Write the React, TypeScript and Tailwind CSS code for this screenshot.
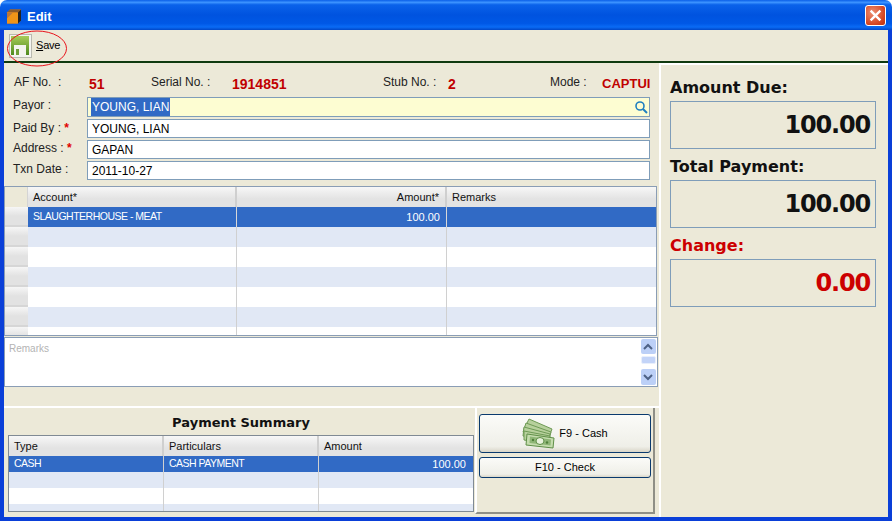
import React from 'react';

const uiFont = "font-['Liberation_Sans',Arial,sans-serif]";

const accountRows = ['selected', 'alt', 'plain', 'alt', 'plain', 'alt', 'plain'];

const SaveIcon = () => (
  <svg width="23" height="24" viewBox="0 0 23 24" className="shrink-0">
    <defs>
      <linearGradient id="floppy" x1="0" y1="0" x2="0" y2="1">
        <stop offset="0" stopColor="#a8cc58" />
        <stop offset="1" stopColor="#4f8a1f" />
      </linearGradient>
    </defs>
    <rect x="0.5" y="0.5" width="22" height="23" fill="#f4f4f0" stroke="#b9b9b0" />
    <path d="M2 2H20V21H2Z" fill="url(#floppy)" />
    <rect x="5" y="11" width="12" height="10" fill="#f4f4ee" />
    <rect x="7" y="15" width="3" height="6" fill="#6f9f37" />
  </svg>
);

const CashIcon = () => (
  <svg width="34" height="31" viewBox="0 0 34 31" className="shrink-0">
    <g stroke="#6e9a55" strokeWidth="1" fill="#b7d09c">
      <path d="M7 1L30 11L27 19L2 11Z" />
      <path d="M4 5L29 14L27 21L1 14Z" />
      <path d="M2 9L28 16L27 23L1 18Z" />
      <path d="M2 13L28 18L27 26L2 22Z" />
    </g>
    <path d="M5 16L32 20L31 30L4 27Z" fill="#c5dcae" stroke="#5f8f47" />
    <path d="M8 18.5L29 21.5L28.5 27.5L7.5 25Z" fill="#8fb676" />
    <ellipse cx="18" cy="23" rx="4" ry="3.5" fill="#e8f2dc" stroke="#5f8f47" />
    <circle cx="11" cy="22" r="1.2" fill="#4f7f3a" />
    <circle cx="25" cy="24.5" r="1.2" fill="#4f7f3a" />
  </svg>
);

const Field = ({ label, star, value, selected, labelClass }: { label: string; star?: boolean; value: string; selected?: boolean; labelClass?: string }) => (
  <div className={`flex items-center ${selected ? 'h-[20px]' : 'h-[19px]'}`}>
    <div className={`w-[74px] shrink-0 text-[12px] text-[#222] ${labelClass ?? ''}`}>
      {label}
      {star && <span className="text-[#e00000] font-bold"> *</span>}
    </div>
    <div className={`relative w-[563px] h-full border border-[#7f9db9] flex items-center pl-[4px] text-[12px] text-black ${selected ? 'bg-[#fdfdd2]' : 'bg-white'}`}>
      {selected ? <span className="bg-[#316ac5] text-white px-px -ml-px">{value}</span> : value}
      {selected && (
        <svg width="14" height="14" viewBox="0 0 14 14" className="absolute right-[1px] top-[2px]">
          <circle cx="6" cy="6" r="4" fill="none" stroke="#1f7fc0" strokeWidth="1.6" />
          <path d="M9 9L13 13" stroke="#1f7fc0" strokeWidth="2" />
        </svg>
      )}
    </div>
  </div>
);

const AmountBox = ({ label, value, red }: { label: string; value: string; red?: boolean }) => (
  <div className="flex flex-col">
    <div className={`h-[20px] leading-[20px] text-[16px] font-bold font-['DejaVu_Sans',sans-serif] ${red ? 'text-[#cc0000]' : 'text-[#111]'}`}>{label}</div>
    <div className={`mt-[3px] w-[206px] h-[48px] border border-[#7f9db9] flex items-center justify-end pr-[5px] text-[24px] font-bold font-['DejaVu_Sans',sans-serif] tracking-[-1.2px] ${red ? 'text-[#cc0000]' : 'text-[#111]'}`}>{value}</div>
  </div>
);

const App = () => {
  return (
    <div className={`w-[892px] h-[521px] overflow-hidden bg-white rounded-t-[7px] flex flex-col ${uiFont}`}>
      {/* Title bar */}
      <div className="h-[30px] shrink-0 flex items-center pl-[6px] pr-[6px] bg-[linear-gradient(180deg,#0a5fe8_0%,#3c93ff_8%,#0a62ea_16%,#0053df_50%,#0058e6_78%,#0a6bf5_90%,#0047c8_100%)]">
        <svg width="16" height="17" viewBox="0 0 16 16" className="shrink-0 mt-[2px]">
          <path d="M1 4L4 1H15V12L12 15H1Z" fill="#d9781c" />
          <path d="M1 4L4 1H15L12 4Z" fill="#8a5a2a" />
          <path d="M12 4L15 1V12L12 15Z" fill="#222" />
          <path d="M1 4H12V15H1Z" fill="#ef9418" />
          <path d="M1 4H7L1 10Z" fill="#b9763a" />
        </svg>
        <span className="ml-[5px] mt-[3px] text-[13px] font-bold text-white">Edit</span>
        <div className="ml-auto w-[21px] h-[21px] rounded-[3px] border border-white bg-[radial-gradient(circle_at_35%_35%,#ec8f72,#d4431f_70%,#b8330f)] flex items-center justify-center">
          <svg width="13" height="13" viewBox="0 0 12 12">
            <path d="M1.5 1.5L10.5 10.5M10.5 1.5L1.5 10.5" stroke="white" strokeWidth="2.2" />
          </svg>
        </div>
      </div>

      {/* Window body */}
      <div className="flex-1 min-h-0 flex flex-col bg-[#ece9d8] border-l-[4px] border-r-[4px] border-b-[4px] border-l-[#0a3fd8] border-r-[#0a3fd8] border-b-[#0a3fd8]">
        {/* Toolbar */}
        <div className="relative h-[33px] shrink-0 flex items-center pl-[5px] border-b-[2px] border-b-[#0f3a0f]">
          <SaveIcon />
          <span className="ml-[4px] text-[11px] tracking-[-0.2px] text-black">
            <span className="underline">S</span>ave
          </span>
          <svg width="62" height="38" viewBox="0 0 62 38" className="absolute left-[2px] top-0">
            <ellipse cx="31" cy="18.5" rx="29.5" ry="17.5" fill="none" stroke="#e8141c" strokeWidth="1" />
          </svg>
        </div>

        <div className="flex-1 min-h-0 flex">
          {/* Left column */}
          <div className="w-[655px] shrink-0 flex flex-col">
            <div className="h-[34px] flex items-end pl-[10px] pb-[6px] text-[12px] text-[#222]">
              <div className="w-[75px]">AF No.&nbsp; :</div>
              <div className="w-[62px] font-bold text-[14px] leading-[14px] text-[#c00000]">51</div>
              <div className="w-[81px]">Serial No. :</div>
              <div className="w-[151px] font-bold text-[14px] leading-[14px] text-[#c00000]">1914851</div>
              <div className="w-[65px]">Stub No. :</div>
              <div className="w-[102px] font-bold text-[14px] leading-[14px] text-[#c00000]">2</div>
              <div className="w-[52px]">Mode :</div>
              <div className="w-[48px] font-bold text-[13px] leading-[14px] text-[#c00000]">CAPTUI</div>
            </div>
            <div className="flex flex-col gap-[2px] pl-[9px]">
              <Field label="Payor :" value="YOUNG, LIAN" selected labelClass="pb-[5px]" />
              <Field label="Paid By :" star value="YOUNG, LIAN" labelClass="pb-[2px]" />
              <Field label="Address :" star value="GAPAN" labelClass="pb-[4px]" />
              <Field label="Txn Date  :" value="2011-10-27" labelClass="pb-[4px]" />
            </div>

            {/* Account grid */}
            <div className="mt-[6px] w-[653px] h-[150px] shrink-0 border border-[#8a9db5] bg-white overflow-hidden text-[11px]">
              <div className="flex h-[20px] text-[#111]">
                <div className="w-[23px] bg-[#ece9d8] border-r border-[#d4d4d4]" />
                <div className="w-[209px] pl-[5px] flex items-center bg-[linear-gradient(180deg,#f7f7f7,#e3e3e3_60%)] border-r-[2px] border-[#cfcfcf]">Account*</div>
                <div className="w-[210px] pr-[6px] flex items-center justify-end bg-[linear-gradient(180deg,#f7f7f7,#e3e3e3_60%)] border-r-[2px] border-[#cfcfcf]">Amount*</div>
                <div className="flex-1 pl-[5px] flex items-center bg-[linear-gradient(180deg,#f7f7f7,#e3e3e3_60%)]">Remarks</div>
              </div>
              {accountRows.map((kind, i) => (
                <div key={i} className="flex h-[20px]">
                  <div className="w-[23px] bg-[linear-gradient(180deg,#f6f6f6,#e2e2e2_50%)] border-b-[2px] border-[#d6d6d6]" />
                  <div className={`w-[209px] pl-[5px] flex items-center border-r-[1px] text-[10.5px] tracking-[-0.5px] ${kind === 'selected' ? 'bg-[#316ac5] text-white border-[#d8d8d8]' : kind === 'alt' ? 'bg-[#e1e8f5] border-[#d0d0d0]' : 'bg-white border-[#d0d0d0]'}`}>
                    {kind === 'selected' ? 'SLAUGHTERHOUSE - MEAT' : ''}
                  </div>
                  <div className={`w-[210px] pr-[6px] flex items-center justify-end border-r-[1px] ${kind === 'selected' ? 'bg-[#316ac5] text-white border-[#d8d8d8]' : kind === 'alt' ? 'bg-[#e1e8f5] border-[#d0d0d0]' : 'bg-white border-[#d0d0d0]'}`}>
                    {kind === 'selected' ? '100.00' : ''}
                  </div>
                  <div className={`flex-1 ${kind === 'selected' ? 'bg-[#316ac5]' : kind === 'alt' ? 'bg-[#e1e8f5]' : 'bg-white'}`} />
                </div>
              ))}
            </div>

            {/* Remarks box */}
            <div className="mt-px w-[654px] h-[50px] shrink-0 border border-[#8a9db5] bg-white flex">
              <div className="flex-1 pl-[4px] pt-[3px] text-[10px] text-[#b4b4b4]">Remarks</div>
              <div className="w-[16px] mr-px flex flex-col items-center pt-px">
                <div className="w-[15px] h-[15px] rounded-[2px] bg-[#bcd0f7] flex items-center justify-center">
                  <svg width="10" height="7" viewBox="0 0 10 7"><path d="M1 6L5 2L9 6" fill="none" stroke="#4d6185" strokeWidth="2" /></svg>
                </div>
                <div className="w-[15px] h-[8px] mt-[2px] rounded-[2px] bg-[#c3d4f8] border border-[#e8effc]" />
                <div className="w-[15px] h-[16px] mt-[5px] rounded-[2px] bg-[#bcd0f7] flex items-center justify-center">
                  <svg width="10" height="7" viewBox="0 0 10 7"><path d="M1 1L5 5L9 1" fill="none" stroke="#4d6185" strokeWidth="2" /></svg>
                </div>
              </div>
            </div>

            {/* Payment area */}
            <div className="mt-[19px] flex-1 min-h-0 flex border-t-[2px] border-white">
              <div className="w-[472px] shrink-0 pl-[4px] pr-[2px] flex flex-col">
                <div className="h-[27px] pt-[2px] flex items-center justify-center text-[13px] font-bold text-[#111] font-['DejaVu_Sans',sans-serif]">Payment Summary</div>
                <div className="w-[466px] h-[77px] border border-[#808a94] bg-white overflow-hidden text-[11px]">
                  <div className="flex h-[20px] text-[#111]">
                    <div className="w-[155px] pl-[5px] flex items-center bg-[linear-gradient(180deg,#f7f7f7,#e3e3e3_60%)] border-r-[2px] border-[#cfcfcf]">Type</div>
                    <div className="w-[155px] pl-[5px] flex items-center bg-[linear-gradient(180deg,#f7f7f7,#e3e3e3_60%)] border-r-[2px] border-[#cfcfcf]">Particulars</div>
                    <div className="flex-1 pl-[5px] flex items-center bg-[linear-gradient(180deg,#f7f7f7,#e3e3e3_60%)]">Amount</div>
                  </div>
                  {['selected', 'alt', 'plain', 'alt'].map((kind, i) => {
                    const rowBg = kind === 'selected' ? 'bg-[#316ac5] text-white' : kind === 'alt' ? 'bg-[#e1e8f5]' : 'bg-white';
                    return (
                      <div key={i} className={`flex h-[16px] ${rowBg}`}>
                        <div className="w-[155px] pl-[5px] flex items-center border-r border-[#d0d0d0] text-[10.5px] tracking-[-0.5px]">{kind === 'selected' ? 'CASH' : ''}</div>
                        <div className="w-[155px] pl-[5px] flex items-center border-r border-[#d0d0d0] text-[10.5px] tracking-[-0.5px]">{kind === 'selected' ? 'CASH PAYMENT' : ''}</div>
                        <div className="flex-1 pr-[7px] flex items-center justify-end">{kind === 'selected' ? '100.00' : ''}</div>
                      </div>
                    );
                  })}
                </div>
              </div>
              <div className="w-[180px] shrink-0 ml-[-1px] h-[106px] border-r-[2px] border-b-[2px] border-r-[#8f8f86] border-b-[#8f8f86] pl-[2px] pt-[6px] flex flex-col gap-[4px] border-l-[2px] border-l-white">
                <button className="w-[172px] h-[39px] rounded-[3px] border border-[#0a3a6e] bg-[linear-gradient(180deg,#fbfbf8,#efefe8_85%,#d9d6c8)] flex items-center justify-center text-[11px] text-black">
                  <CashIcon />
                  <span className="ml-[3px]">F9 - Cash</span>
                </button>
                <button className="w-[172px] h-[21px] rounded-[3px] border border-[#0a3a6e] bg-[linear-gradient(180deg,#fbfbf8,#efefe8_85%,#d9d6c8)] flex items-center justify-center text-[11px] text-black">
                  F10 - Check
                </button>
              </div>
            </div>
          </div>

          {/* Right column */}
          <div className="flex-1 border-l-[2px] border-t-[2px] border-white pl-[9px] pt-[13px] flex flex-col gap-[8px]">
            <AmountBox label="Amount Due:" value="100.00" />
            <AmountBox label="Total Payment:" value="100.00" />
            <AmountBox label="Change:" value="0.00" red />
          </div>
        </div>
      </div>
    </div>
  );
};

export default App;
